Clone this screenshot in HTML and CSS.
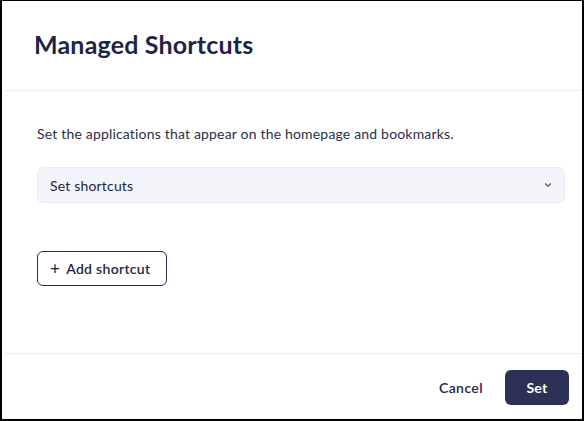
FILE: index.html
```html
<!DOCTYPE html>
<html>
<head>
<meta charset="utf-8">
<link rel="stylesheet" href="styles.css">
</head>
<body>
<div class="dialog">
  <header class="dialog-header">
    <h1 class="title">Managed Shortcuts</h1>
  </header>
  <div class="divider"></div>
  <main class="dialog-body">
    <p class="desc">Set the applications that appear on the homepage and bookmarks.</p>
    <div class="select">
      <span class="select-label">Set shortcuts</span>
      <svg class="chevron" width="8" height="6" viewBox="0 0 8 6"><path d="M1.5 1.8 L4 4.2 L6.5 1.8" fill="none" stroke="#5f6380" stroke-width="1.4" stroke-linecap="round" stroke-linejoin="round"/></svg>
    </div>
    <button class="add-btn"><span class="plus">+</span>Add shortcut</button>
  </main>
  <div class="divider"></div>
  <footer class="dialog-footer">
    <button class="cancel-btn">Cancel</button>
    <button class="set-btn">Set</button>
  </footer>
</div>
</body>
</html>
```
FILE: styles.css
```css
* { box-sizing: border-box; }
html, body { margin: 0; padding: 0; background: #fff; }
body { font-family: Lato, "Liberation Sans", sans-serif; color: #1f2440; letter-spacing: 0.18px; }
.dialog {
  width: 584px;
  height: 421px;
  border-style: solid;
  border-color: #000;
  border-width: 1px 2px 2px 2px;
  display: flex;
  flex-direction: column;
  background: #fff;
}
.dialog-header { padding: 28px 32px 31px; }
.title {
  margin: 0;
  font-size: 25px;
  line-height: 30px;
  font-weight: 700;
  letter-spacing: 0.18px;
  color: #1f2444;
}
.divider {
  height: 1px;
  background: #ebebf2;
  margin: 0 1px 0 3px;
}
.dialog-body {
  flex: 1;
  padding: 33px 17px 0 35px;
}
.desc {
  margin: 0;
  font-size: 14px;
  line-height: 20px;
  color: #2a2e45;
}
.select {
  margin-top: 23px;
  height: 36px;
  background: #f4f5fa;
  border: 1px solid #eaebf2;
  border-radius: 6px;
  display: flex;
  align-items: center;
  justify-content: space-between;
  padding: 0 12px 0 12px;
}
.select-label { font-size: 14px; color: #1f2440; }
.chevron { display: block; }
.add-btn {
  margin-top: 48px;
  height: 35px;
  padding: 0 16px 0 12px;
  background: #fff;
  border: 1px solid #262b4a;
  border-radius: 6px;
  font-family: inherit;
  font-size: 14px;
  font-weight: 600;
  letter-spacing: 0.3px;
  color: #1f2444;
  display: flex;
  align-items: center;
  gap: 6px;
}
.plus { font-size: 17px; font-weight: 400; line-height: 1; }
.dialog-footer {
  display: flex;
  justify-content: flex-end;
  align-items: center;
  gap: 6px;
  padding: 16px 13px 14px 0;
}
.cancel-btn {
  background: none;
  border: none;
  font-family: inherit;
  font-size: 14px;
  font-weight: 600;
  letter-spacing: 0.4px;
  color: #1f2444;
  height: 35px;
  padding: 0 16px;
}
.set-btn {
  width: 64px;
  height: 35px;
  background: #2b3256;
  color: #fff;
  border: none;
  border-radius: 6px;
  font-family: inherit;
  font-size: 14px;
  font-weight: 700;
  letter-spacing: 0.3px;
}
```
